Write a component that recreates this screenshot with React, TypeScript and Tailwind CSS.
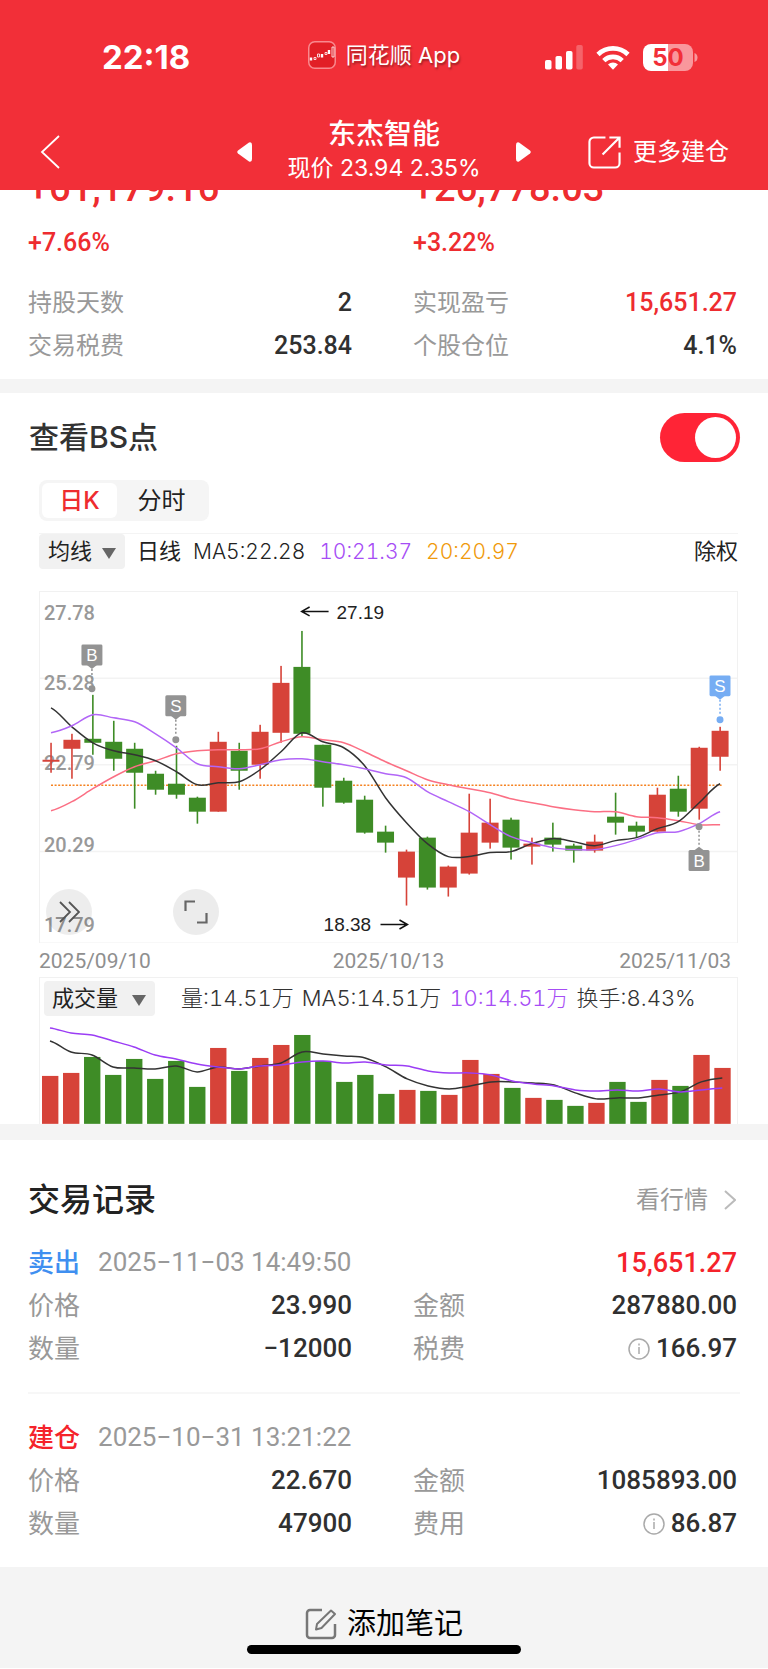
import { useState } from "react";
import clsx from "clsx";

type Candle = [up: boolean, high: number, top: number, bottom: number, low: number];

const RED = "#d64339";
const GREEN = "#3e8c26";

// [up, high, body top, body bottom, low] in chart coordinates
const candles: Candle[] = [
  [true, 743, 760, 762, 773],
  [true, 734, 740, 749, 779],
  [false, 695, 739, 743, 755],
  [false, 721, 742, 759, 771],
  [false, 743, 749, 773, 809],
  [false, 771, 774, 790, 795],
  [false, 746, 784, 795, 799],
  [false, 797, 798, 812, 824],
  [true, 732, 742, 812, 812],
  [false, 743, 751, 771, 790],
  [true, 725, 732, 765, 779],
  [true, 666, 683, 733, 743],
  [false, 631, 667, 734, 737],
  [false, 745, 745, 788, 807],
  [false, 778, 781, 803, 804],
  [false, 796, 800, 833, 834],
  [false, 826, 832, 843, 853],
  [true, 850, 852, 878, 906],
  [false, 837, 838, 888, 890],
  [true, 866, 867, 888, 897],
  [true, 794, 833, 874, 875],
  [true, 799, 823, 843, 849],
  [false, 818, 820, 848, 860],
  [true, 838, 844, 847, 865],
  [false, 823, 838, 845, 852],
  [false, 844, 846, 851, 863],
  [true, 835, 842, 851, 853],
  [false, 793, 817, 823, 835],
  [false, 822, 826, 832, 838],
  [true, 788, 795, 832, 832],
  [false, 776, 789, 812, 817],
  [true, 747, 748, 809, 820],
  [true, 727, 731, 757, 771],
];

const ma5 = [708, 727, 743, 751, 755, 761, 772, 785, 783, 782, 770, 752, 733, 742, 748, 766, 798, 823, 844, 857, 857, 853, 852, 844, 839, 842, 846, 841, 838, 829, 822, 803, 784];
const ma10 = [733, 726, 715, 718, 722, 734, 748, 764, 767, 769, 765, 760, 759, 762, 765, 769, 774, 778, 792, 802, 812, 825, 837, 843, 848, 850, 850, 846, 840, 833, 832, 824, 812];
const ma20 = [811, 802, 789, 777, 767, 761, 754, 751, 750, 750, 749, 742, 737, 740, 743, 752, 762, 771, 780, 785, 789, 793, 799, 803, 807, 810, 812, 812, 817, 818, 821, 825, 825];

const volumes = [1077, 1074, 1058, 1076, 1060, 1080, 1062, 1088, 1049, 1072, 1059, 1046, 1036, 1062, 1083, 1076, 1095, 1091, 1092, 1096, 1061, 1075, 1089, 1099, 1101, 1107, 1104, 1083, 1103, 1081, 1087, 1056, 1069];
const vol5 = [1042, 1053, 1056, 1068, 1069, 1070, 1067, 1073, 1068, 1070, 1067, 1064, 1053, 1055, 1057, 1059, 1068, 1080, 1087, 1090, 1087, 1083, 1083, 1084, 1086, 1094, 1100, 1099, 1099, 1096, 1093, 1083, 1079];
const vol10 = [1029, 1034, 1036, 1042, 1048, 1056, 1060, 1065, 1068, 1070, 1067, 1066, 1063, 1062, 1064, 1063, 1066, 1067, 1072, 1074, 1074, 1076, 1082, 1085, 1087, 1091, 1092, 1091, 1092, 1090, 1093, 1091, 1089];

const priceX = (i: number) => 50 + i * 20.94;
const volumeX = (i: number) => 49 + i * 21.04;

function smooth(ys: number[], x: (i: number) => number) {
  let d = `M${x(0)} ${ys[0]}`;
  for (let i = 0; i < ys.length - 1; i++) {
    const step = (x(i + 1) - x(i)) / 3;
    const before = ys[Math.max(i - 1, 0)];
    const after = ys[Math.min(i + 2, ys.length - 1)];
    const c1 = ys[i] + (ys[i + 1] - before) / 6;
    const c2 = ys[i + 1] - (after - ys[i]) / 6;
    d += ` C${x(i) + step} ${c1} ${x(i + 1) - step} ${c2} ${x(i + 1)} ${ys[i + 1]}`;
  }
  return d;
}

function Marker({ x, y, dot, label, color }: { x: number; y: number; dot: number; label: string; color: string }) {
  const below = dot < y;
  return (
    <g>
      <path
        d={below ? `M${x} ${dot + 4}V${y - 14}` : `M${x} ${y + 14}V${dot - 4}`}
        stroke={color}
        strokeWidth="1.5"
        strokeDasharray="2 2"
      />
      <circle cx={x} cy={dot} r="3.5" fill={color} />
      <rect x={x - 10.5} y={y - 10.5} width="21" height="21" rx="1.5" fill={color} />
      <path d={below ? `M${x - 5} ${y - 10}l5 -4l5 4z` : `M${x - 5} ${y + 10}l5 4l5 -4z`} fill={color} />
      <text x={x} y={y + 6} textAnchor="middle" fontSize="17" fill="#fff" className="font-['Liberation_Sans',sans-serif]">
        {label}
      </text>
    </g>
  );
}

function PriceChart() {
  const axis = [
    ["27.78", 620],
    ["25.28", 690],
    ["22.79", 770],
    ["20.29", 852],
    ["17.79", 933],
  ] as const;

  return (
    <svg viewBox="38 591 700 353" className="block h-auto w-full" fill="none" role="img" aria-label="日K线图">
      <rect x="38.5" y="591.5" width="699" height="352" stroke="#f1f1f1" />
      <path d="M39 678.5H737M39 765H737M39 852H737" stroke="#f3f3f3" strokeWidth="1.5" />
      <g fill="#999" fontSize="20" className="font-['Roboto',sans-serif] font-medium">
        {axis.map(([label, y]) => (
          <text key={label} x="43" y={y}>{label}</text>
        ))}
      </g>
      <path d="M50 785.5H722" stroke="#f58220" strokeWidth="1.5" strokeDasharray="2 1.6" />
      {candles.map(([up, high, top, bottom, low], i) => (
        <g key={i} fill={up ? RED : GREEN}>
          <rect x={priceX(i) - 0.75} y={high} width="1.6" height={low - high} />
          <rect x={priceX(i) - 8.5} y={top} width="17" height={bottom - top} />
        </g>
      ))}
      <path d={smooth(ma20, priceX)} stroke="#fb6f84" strokeWidth="1.5" />
      <path d={smooth(ma5, priceX)} stroke="#333" strokeWidth="1.5" />
      <path d={smooth(ma10, priceX)} stroke="#b266f7" strokeWidth="1.5" />

      <Marker x={91} y={655} dot={689} label="B" color="#939393" />
      <Marker x={175} y={706} dot={740} label="S" color="#939393" />
      <Marker x={720} y={686} dot={720} label="S" color="#76adf3" />
      <Marker x={699} y={861} dot={827} label="B" color="#939393" />

      <g stroke="#111" strokeWidth="1.5">
        <path d="M328 611.5H302M309 607l-8 4.500l8 4.500" />
        <path d="M380 925H406M399 920.500l8 4.500l-8 4.500" />
      </g>
      <g fill="#222" fontSize="19" className="font-['Liberation_Sans',sans-serif]">
        <text x="336" y="619">27.19</text>
        <text x="323" y="932">18.38</text>
      </g>
    </svg>
  );
}

function VolumeChart() {
  return (
    <svg viewBox="39 1017 698 108" className="block h-auto w-full" fill="none" role="img" aria-label="成交量图">
      {volumes.map((top, i) => (
        <rect key={i} x={volumeX(i) - 8} y={top} width="16.4" height={1125 - top} fill={candles[i][0] ? RED : GREEN} />
      ))}
      <path d={smooth(vol5, volumeX)} stroke="#333" strokeWidth="1.5" />
      <path d={smooth(vol10, volumeX)} stroke="#9b3df5" strokeWidth="1.5" />
    </svg>
  );
}

function Picker({ label, options, className }: { label: string; options: string[]; className: string }) {
  return (
    <div className="relative shrink-0">
      <select
        aria-label={label}
        className={clsx("block h-[35px] appearance-none rounded-sm bg-[#f1f1f1] text-[22px] leading-[35px] font-normal text-[#222]", className)}
      >
        {options.map((option) => (
          <option key={option}>{option}</option>
        ))}
      </select>
      <svg viewBox="0 0 14 11" className="pointer-events-none absolute top-[14px] right-[9px] h-[11px] w-[14px]" fill="#666">
        <path d="M0 0h14L7 11z" />
      </svg>
    </div>
  );
}

function Field({ label, value, red, info, small }: { label: string; value: string; red?: boolean; info?: boolean; small?: boolean }) {
  return (
    <div className="flex h-[43px] items-center justify-between">
      <dt className={clsx("text-[#999]", small ? "text-2xl" : "text-[26px]")}>{label}</dt>
      <dd
        className={clsx(
          "flex items-center gap-[6px] font-['Roboto',sans-serif] font-medium",
          small ? "text-[25px]" : "text-[26px]",
          red ? "text-[#ee2c2f]" : "text-[#303030]"
        )}
      >
        {info && (
          <svg viewBox="0 0 22 22" className="h-[22px] w-[22px]" fill="none" stroke="#aaa" strokeWidth="1.5">
            <circle cx="11" cy="11" r="10" />
            <path d="M11 9v7M11 5.500v2" />
          </svg>
        )}
        {value}
      </dd>
    </div>
  );
}

type Trade = {
  side: string;
  sell: boolean;
  time: string;
  profit?: string;
  price: string;
  count: string;
  amount: string;
  feeLabel: string;
  fee: string;
};

const trades: Trade[] = [
  { side: "卖出", sell: true, time: "2025−11−03 14:49:50", profit: "15,651.27", price: "23.990", count: "−12000", amount: "287880.00", feeLabel: "税费", fee: "166.97" },
  { side: "建仓", sell: false, time: "2025−10−31 13:21:22", price: "22.670", count: "47900", amount: "1085893.00", feeLabel: "费用", fee: "86.87" },
];

function TradeItem({ trade }: { trade: Trade }) {
  return (
    <article>
      <div className="flex h-[43px] items-center justify-between pr-[3px]">
        <div className="flex items-center gap-[18px]">
          <h3 className={clsx("text-[26px] font-medium", trade.sell ? "text-[#3f8ff0]" : "text-[#f5232b]")}>{trade.side}</h3>
          <time className="font-['Roboto',sans-serif] text-[26px] text-[#999]">{trade.time}</time>
        </div>
        {trade.profit && (
          <span className="font-['Roboto',sans-serif] text-[27px] font-medium text-[#f5232b]">{trade.profit}</span>
        )}
      </div>
      <dl className="grid grid-cols-2 gap-x-[61px] pr-[3px]">
        <Field label="价格" value={trade.price} />
        <Field label="金额" value={trade.amount} />
        <Field label="数量" value={trade.count} />
        <Field label={trade.feeLabel} value={trade.fee} info />
      </dl>
    </article>
  );
}

function StatusBar() {
  return (
    <div className="grid h-[42px] grid-cols-[1fr_auto_1fr] items-center">
      <span className="pl-[102px] text-[33px] leading-none font-bold">22:18</span>
      <div className="flex items-center gap-[10px] pb-1">
        <svg viewBox="0 0 28 28" className="h-7 w-7" fill="none" stroke="#fff">
          <rect x="0.75" y="0.75" width="26.5" height="26.5" rx="6" fill="#e21f26" stroke="#f9898e" strokeWidth="1.5" />
          <path d="M3 16.500v3M14 13v3.500M21 9v4" strokeWidth="2.4" />
          <path d="M6 16.500h2v2H6zM9.500 13h2v3h-2zM17 11.500h2v2h-2zM24 6h2v10h-2z" strokeWidth="0.8" />
        </svg>
        <span className="text-[22px] leading-7 [text-shadow:1px_2px_2px_rgba(0,0,0,0.35)]">同花顺 App</span>
      </div>
      <div className="flex items-center justify-end gap-[13px] pr-[70px]">
        <svg viewBox="0 0 38 25" className="h-[25px] w-[38px]" fill="#fff">
          <rect x="0" y="15" width="6.5" height="9.5" rx="1.8" />
          <rect x="10.5" y="11" width="6.5" height="13.5" rx="1.8" />
          <rect x="21" y="6" width="6.5" height="18.5" rx="1.8" />
          <rect x="31.3" y="0" width="6.5" height="24.5" rx="1.8" opacity="0.25" />
        </svg>
        <svg viewBox="0 0 34 25" className="h-[25px] w-[34px]" fill="none" stroke="#fff" strokeWidth="4.6">
          <path d="M2 9.500a21.500 21.500 0 0 1 30 0" />
          <path d="M7.800 15.600a13.200 13.200 0 0 1 18.400 0" />
          <path d="M17 24.800l-5 -5.200a7.200 7.200 0 0 1 10 0z" fill="#fff" stroke="none" />
        </svg>
        <svg viewBox="0 0 55 27" className="h-[27px] w-[55px]">
          <path d="M8 0H25V27H8a8 8 0 0 1-8-8V8a8 8 0 0 1 8-8z" fill="#fff" />
          <path d="M25 0H42a8 8 0 0 1 8 8V19a8 8 0 0 1-8 8H25z" fill="#fff" opacity="0.5" />
          <path d="M51.500 9q3 1 3 4.500t-3 4.500z" fill="#fff" opacity="0.5" />
          <text x="25" y="22" textAnchor="middle" fontSize="24" fill="#f22f38" className="font-bold">50</text>
        </svg>
      </div>
    </div>
  );
}

function Header() {
  return (
    <header className="bg-[#f22f38] pt-9 pb-1 text-white">
      <StatusBar />
      <nav className="grid grid-cols-[1fr_auto_1fr] items-center pt-10">
        <button aria-label="返回" className="ml-10 w-5">
          <svg viewBox="0 0 20 34" className="h-[34px] w-5" fill="none" stroke="#fff" strokeWidth="1.8">
            <path d="M19 1L2 17l17 16" />
          </svg>
        </button>
        <div className="flex w-[294px] items-center justify-between">
          <button aria-label="上一只">
            <svg viewBox="0 0 15 20" className="h-5 w-[15px]" fill="#fff">
              <path d="M12 0.500Q15 -0.500 15 3V17Q15 20.500 12 19.500L1 11.500Q-0.500 10 1 8.500z" />
            </svg>
          </button>
          <div className="text-center">
            <h1 className="text-[28px] leading-8 font-medium">东杰智能</h1>
            <p className="text-[23px] leading-9">现价 23.94 2.35%</p>
          </div>
          <button aria-label="下一只">
            <svg viewBox="0 0 15 20" className="h-5 w-[15px]" fill="#fff">
              <path d="M3 0.500Q0 -0.500 0 3V17Q0 20.500 3 19.500L14 11.500Q15.500 10 14 8.500z" />
            </svg>
          </button>
        </div>
        <button className="mr-[39px] flex items-center justify-end gap-3 text-2xl">
          <svg viewBox="0 0 34 34" className="h-[33px] w-[33px]" fill="none" stroke="#fff" strokeWidth="2.2">
            <path d="M18 1.500H6A4.500 4.500 0 0 0 1.500 6V28A4.500 4.500 0 0 0 6 32.500H28A4.500 4.500 0 0 0 32.500 28V17" />
            <path d="M22 1.500H32.500V12M32 2L15 19" />
          </svg>
          更多建仓
        </button>
      </nav>
    </header>
  );
}

export default function App() {
  const [mode, setMode] = useState<"day" | "minute">("day");
  const [showPoints, setShowPoints] = useState(true);

  const tab = (active: boolean) =>
    clsx("h-[35px] rounded-md text-2xl leading-[35px]", active ? "w-[75px] bg-white font-medium text-[#ee2c2f]" : "w-[89px] text-[#222]");

  return (
    <div className="w-full overflow-hidden bg-white font-['Inter','Noto_Sans_CJK_SC',sans-serif] text-[#222]">
      <Header />

      {/* Position summary, scrolled partly under the header */}
      <section className="pr-[31px] pb-3 pl-7">
        <div className="grid grid-cols-2 gap-x-[61px] font-['Roboto',sans-serif] font-medium text-[#ee2c2f]">
          <div className="flex h-[18px] items-end overflow-hidden text-[38px] leading-10">+61,179.16</div>
          <div className="flex h-[18px] items-end overflow-hidden text-[38px] leading-10">+26,778.03</div>
          <div className="mt-[17px] text-[25px] leading-9">+7.66%</div>
          <div className="mt-[17px] text-[25px] leading-9">+3.22%</div>
        </div>
        <dl className="mt-5 grid grid-cols-2 gap-x-[61px]">
          <Field label="持股天数" value="2" small />
          <Field label="实现盈亏" value="15,651.27" red small />
          <Field label="交易税费" value="253.84" small />
          <Field label="个股仓位" value="4.1%" small />
        </dl>
      </section>

      <div className="h-[14px] bg-[#f4f4f4]" />

      <section>
        <label className="flex h-[74px] cursor-pointer items-center justify-between pt-[14px] pr-7 pl-[29px]">
          <span className="text-[30px] leading-9 font-medium text-[#333]">查看BS点</span>
          <input
            type="checkbox"
            className="peer sr-only"
            checked={showPoints}
            onChange={(e) => setShowPoints(e.target.checked)}
          />
          <span className="flex h-[49px] w-[80px] items-center rounded-full bg-[#ddd] px-1 peer-checked:justify-end peer-checked:bg-[#ff2436]">
            <span className="h-[41px] w-[41px] rounded-full bg-white" />
          </span>
        </label>

        <div className="mr-[30px] ml-[39px]">
          <div className="mt-[13px] flex h-[41px] w-fit items-center rounded-lg bg-[#f5f5f5] px-[3px]">
            <button className={tab(mode === "day")} onClick={() => setMode("day")}>日K</button>
            <button className={tab(mode === "minute")} onClick={() => setMode("minute")}>分时</button>
          </div>

          <div className="mt-3 flex h-9 items-center border-t border-[#f4f4f4] text-[21px] whitespace-nowrap tabular-nums">
            <Picker label="指标" options={["均线", "BOLL"]} className="w-[86px] pl-[9px]" />
            <span className="ml-3 text-[22px]">日线</span>
            <span className="ml-3 font-light">MA5:22.28</span>
            <span className="ml-[14px] font-light text-[#a64df5]">10:21.37</span>
            <span className="ml-[14px] font-light text-[#f09a0b]">20:20.97</span>
            <button className="ml-auto text-[22px]">除权</button>
          </div>

          <div className="relative mt-[22px]">
            <PriceChart />
            <button aria-label="展开" className="absolute bottom-2 left-[7px] flex h-[46px] w-[46px] items-center justify-center rounded-full bg-black/7">
              <svg viewBox="0 0 22 22" className="h-[22px] w-[22px]" fill="none" stroke="#555" strokeWidth="1.8">
                <path d="M2 1l10 10L2 21M11 1l10 10L11 21" />
              </svg>
            </button>
            <button aria-label="全屏" className="absolute bottom-2 left-[134px] flex h-[46px] w-[46px] items-center justify-center rounded-full bg-[#ececec]">
              <svg viewBox="0 0 24 24" className="h-6 w-6" fill="none" stroke="#666" strokeWidth="2.2">
                <path d="M1.500 11V1.500H11M22.500 13V22.500H13" />
              </svg>
            </button>
          </div>

          <div className="grid h-[34px] grid-cols-3 items-center pt-[3px] font-['Roboto',sans-serif] text-[21px] text-[#8f8f8f]">
            <time>2025/09/10</time>
            <time className="text-center">2025/10/13</time>
            <time className="pr-[7px] text-right">2025/11/03</time>
          </div>

          <div className="border border-b-0 border-[#f1f1f1] pt-[3px]">
            <div className="flex items-center pl-1 text-[22px] font-light whitespace-nowrap text-[#333] tabular-nums">
              <Picker label="副图指标" options={["成交量", "MACD", "KDJ"]} className="w-[111px] pl-[8px]" />
              <span className="ml-[26px]">量:14.51万</span>
              <span className="ml-2">MA5:14.51万</span>
              <span className="ml-2 text-[#a64df5]">10:14.51万</span>
              <span className="ml-2">换手:8.43%</span>
            </div>
            <VolumeChart />
          </div>
        </div>
      </section>

      <div className="h-4 bg-[#f4f4f4]" />

      <section className="px-7 pt-[38px] pb-[22px]">
        <div className="mb-[19px] flex h-11 items-center justify-between pr-1">
          <h2 className="text-[32px] leading-none font-medium">交易记录</h2>
          <a href="#quote" className="flex items-center gap-4 text-2xl text-[#999]">
            看行情
            <svg viewBox="0 0 12 20" className="h-5 w-3" fill="none" stroke="#bbb" strokeWidth="2">
              <path d="M1 1l10 9L1 19" />
            </svg>
          </a>
        </div>
        <TradeItem trade={trades[0]} />
        <div className="mt-[22px] mb-[22px] h-[2px] bg-[#f7f7f7]" />
        <TradeItem trade={trades[1]} />
      </section>

      <footer className="flex flex-col items-center bg-[#f4f4f4] pt-[37px] pb-[14px]">
        <button className="flex h-10 items-center gap-[10px] text-[29px] leading-10 text-black">
          <svg viewBox="0 0 32 32" className="h-8 w-8" fill="none" stroke="#777" strokeWidth="2.5">
            <path d="M17 2H5A3 3 0 0 0 2 5V27A3 3 0 0 0 5 30H27A3 3 0 0 0 30 27V16" />
            <path d="M11 21.500L12 16L26 2.500L30 6L16.500 20z" strokeWidth="2" strokeLinejoin="round" />
          </svg>
          添加笔记
        </button>
        <div className="mt-px h-[9px] w-[274px] rounded-full bg-black" />
      </footer>
    </div>
  );
}
